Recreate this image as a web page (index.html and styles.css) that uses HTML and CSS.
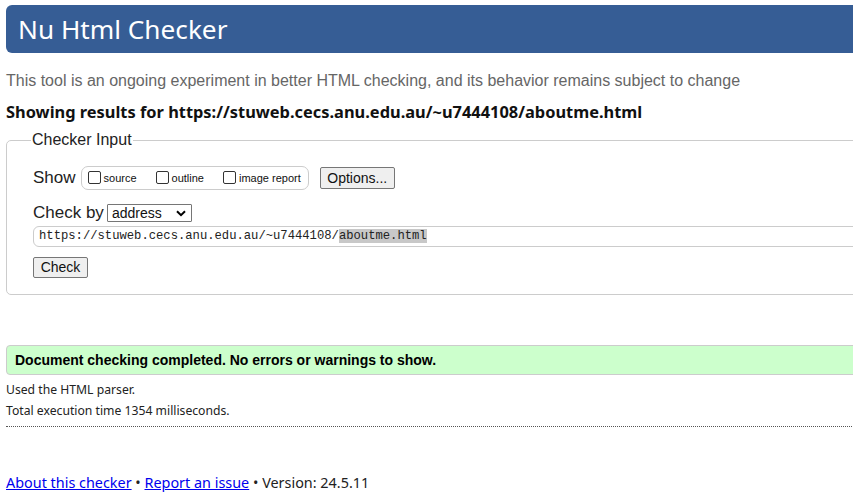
FILE: index.html
```html
<!DOCTYPE html>
<html lang="en">
<head>
<meta charset="utf-8">
<title>Nu Html Checker</title>
<link rel="stylesheet" href="styles.css">
</head>
<body>
<div class="page">
  <h1 class="banner">Nu Html Checker</h1>
  <p class="tagline">This tool is an ongoing experiment in better HTML checking, and its behavior remains subject to change</p>
  <p class="showing">Showing results for https://stuweb.cecs.anu.edu.au/~u7444108/aboutme.html</p>
  <fieldset class="input">
    <legend>Checker Input</legend>
    <div class="row show-row">
      <span class="label">Show</span>
      <span class="opts">
        <label class="opt"><span class="box"></span>source</label>
        <label class="opt"><span class="box"></span>outline</label>
        <label class="opt"><span class="box"></span>image report</label>
      </span>
      <span class="btn options">Options...</span>
    </div>
    <div class="row by-row">
      <span class="label">Check by</span>
      <span class="select">address<svg class="chev" width="10" height="7" viewBox="0 0 10 7"><path d="M1 1.2 L5 5.2 L9 1.2" fill="none" stroke="#000" stroke-width="2"/></svg></span>
    </div>
    <div class="url">https://stuweb.cecs.anu.edu.au/~u7444108/<span class="sel">aboutme.html</span></div>
    <span class="btn check">Check</span>
  </fieldset>
  <div class="success">Document checking completed. No errors or warnings to show.</div>
  <p class="details">Used the HTML parser.</p>
  <p class="details">Total execution time 1354 milliseconds.</p>
  <hr class="dots">
  <p class="footer"><a href="#">About this checker</a> • <a href="#">Report an issue</a> • Version: 24.5.11</p>
</div>
</body>
</html>
```
FILE: styles.css
```css
html, body {
  margin: 0;
  padding: 0;
  overflow: hidden;
  background: #fff;
}
.page {
  width: 1100px;
  padding: 5px 0 0 6px;
  font-family: "Liberation Sans", Arial, sans-serif;
  color: #000;
}
.banner {
  margin: 0;
  height: 48px;
  box-sizing: border-box;
  background: #365d95;
  color: #fff;
  border-radius: 6px 0 0 6px;
  font-family: "Noto Sans", sans-serif;
  font-weight: 400;
  font-size: 26.2px;
  line-height: 48px;
  padding-left: 12px;
}
.tagline {
  margin: 18px 0 0 0;
  font-size: 16px;
  line-height: 20px;
  color: #666;
}
.showing {
  margin: 10px 0 0 0;
  font-family: "Noto Sans", sans-serif;
  font-weight: 700;
  font-size: 16.4px;
  line-height: 22px;
  color: #111;
}
.input {
  margin: 8px 0 0 0;
  border: 1px solid #ccc;
  border-radius: 5px;
  padding: 4px 26px 16px 26px;
}
.input legend {
  font-size: 16px;
  padding: 0 1px;
  margin-left: -2px;
  color: #222;
}
.row {
  display: flex;
  align-items: center;
}
.show-row {
  margin-top: 12px;
  height: 26px;
}
.label {
  font-size: 17px;
  color: #222;
}
.opts {
  display: flex;
  align-items: center;
  margin-left: 5px;
  height: 24px;
  box-sizing: border-box;
  border: 1px solid #ccc;
  border-radius: 7px;
  padding: 0 7px 0 6px;
  gap: 19px;
}
.opt {
  display: flex;
  align-items: center;
  font-size: 11px;
  color: #111;
  gap: 3px;
}
.box {
  width: 11px;
  height: 11px;
  border: 1px solid #333;
  border-radius: 2px;
  background: #fff;
  margin-top: -2px;
}
.btn {
  display: inline-block;
  box-sizing: border-box;
  border: 1px solid #767676;
  border-radius: 2px;
  background: #efefef;
  font-size: 14px;
  color: #111;
  text-align: center;
}
.options {
  margin-left: 11px;
  width: 75px;
  height: 22px;
  line-height: 20px;
}
.by-row {
  margin-top: 12px;
  height: 20px;
}
.select {
  display: flex;
  align-items: center;
  justify-content: space-between;
  margin-left: 3px;
  width: 85px;
  height: 18px;
  box-sizing: border-box;
  border: 1px solid #767676;
  border-radius: 1px;
  font-size: 14px;
  padding: 0 5px 0 4px;
  color: #111;
}
.url {
  margin-top: 3px;
  height: 21px;
  box-sizing: border-box;
  border: 1px solid #ccc;
  border-radius: 6px 0 0 6px;
  font-family: "Liberation Mono", monospace;
  font-size: 12.2px;
  line-height: 19px;
  padding-left: 5px;
  color: #222;
}
.sel {
  background: #c8c8c8;
}
.check {
  margin-top: 10px;
  width: 55px;
  height: 21px;
  line-height: 19px;
}
.success {
  margin-top: 50px;
  height: 30px;
  box-sizing: border-box;
  border: 1px solid #ccc;
  border-radius: 4px 0 0 4px;
  background: #ccffcc;
  font-weight: 700;
  font-size: 14px;
  line-height: 28px;
  padding-left: 8px;
}
.details {
  margin: 0;
  font-family: "Noto Sans", sans-serif;
  font-size: 12.2px;
  line-height: 21px;
  color: #222;
}
.success + .details {
  margin-top: 4px;
}
.dots {
  margin: 5px 0 0 0;
  border: 0;
  border-top: 1px dotted #555;
  height: 0;
}
.footer {
  margin: 46px 0 0 0;
  font-family: "Noto Sans", sans-serif;
  font-size: 14.4px;
  line-height: 20px;
  color: #222;
}
.footer a {
  color: #0000ee;
}
```
